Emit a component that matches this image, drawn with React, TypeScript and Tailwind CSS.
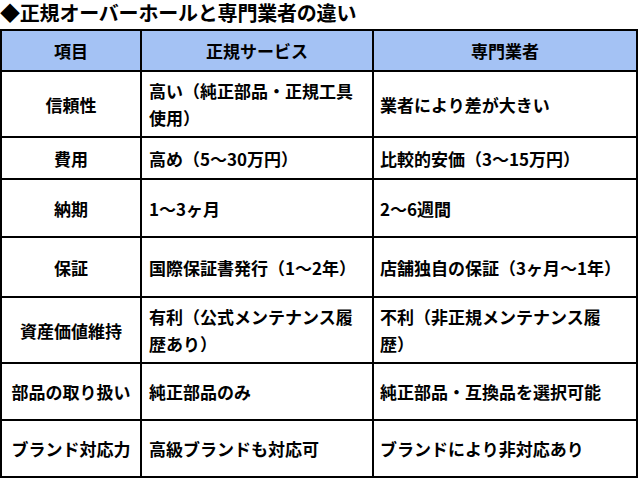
import React from "react";

const rows: { label: string; official: string; shop: string; h: string }[] = [
  { label: "信頼性", official: "高い（純正部品・正規工具使用）", shop: "業者により差が大きい", h: "h-[66px]" },
  { label: "費用", official: "高め（5〜30万円）", shop: "比較的安価（3〜15万円）", h: "h-[42px]" },
  { label: "納期", official: "1〜3ヶ月", shop: "2〜6週間", h: "h-[58px]" },
  { label: "保証", official: "国際保証書発行（1〜2年）", shop: "店舗独自の保証（3ヶ月〜1年）", h: "h-[60px]" },
  { label: "資産価値維持", official: "有利（公式メンテナンス履歴あり）", shop: "不利（非正規メンテナンス履歴）", h: "h-[66px]" },
  { label: "部品の取り扱い", official: "純正部品のみ", shop: "純正部品・互換品を選択可能", h: "h-[57px]" },
  { label: "ブランド対応力", official: "高級ブランドも対応可", shop: "ブランドにより非対応あり", h: "h-[57px]" },
];

export default function App() {
  return (
    <div className="w-[640px] h-[480px] bg-white text-black font-['Noto_Sans_CJK_JP',sans-serif] overflow-hidden">
      {/* title */}
      <h1 className="h-[29px] text-[20px] leading-[26px] font-bold tracking-[-0.2px] whitespace-nowrap">◆正規オーバーホールと専門業者の違い</h1>

      {/* comparison table */}
      <div className="w-[638px] grid grid-cols-[140px_232px_264px] border-l-2 border-t-2 border-black text-[17px] leading-[27px] font-bold">
        <div className="h-[41px] bg-[#a4c2f4] border-r-2 border-b-2 border-black flex items-center justify-center">項目</div>
        <div className="h-[41px] bg-[#a4c2f4] border-r-2 border-b-2 border-black flex items-center justify-center">正規サービス</div>
        <div className="h-[41px] bg-[#a4c2f4] border-r-2 border-b-2 border-black flex items-center justify-center">専門業者</div>

        {rows.map(r => (
          <React.Fragment key={r.label}>
            <div className={`${r.h} border-r-2 border-b-2 border-black flex items-center justify-center`}>{r.label}</div>
            <div className={`${r.h} border-r-2 border-b-2 border-black flex items-center pl-[7px] pr-2`}>{r.official}</div>
            <div className={`${r.h} border-r-2 border-b-2 border-black flex items-center pl-[6px] pr-[14px]`}>{r.shop}</div>
          </React.Fragment>
        ))}
      </div>
    </div>
  );
}
